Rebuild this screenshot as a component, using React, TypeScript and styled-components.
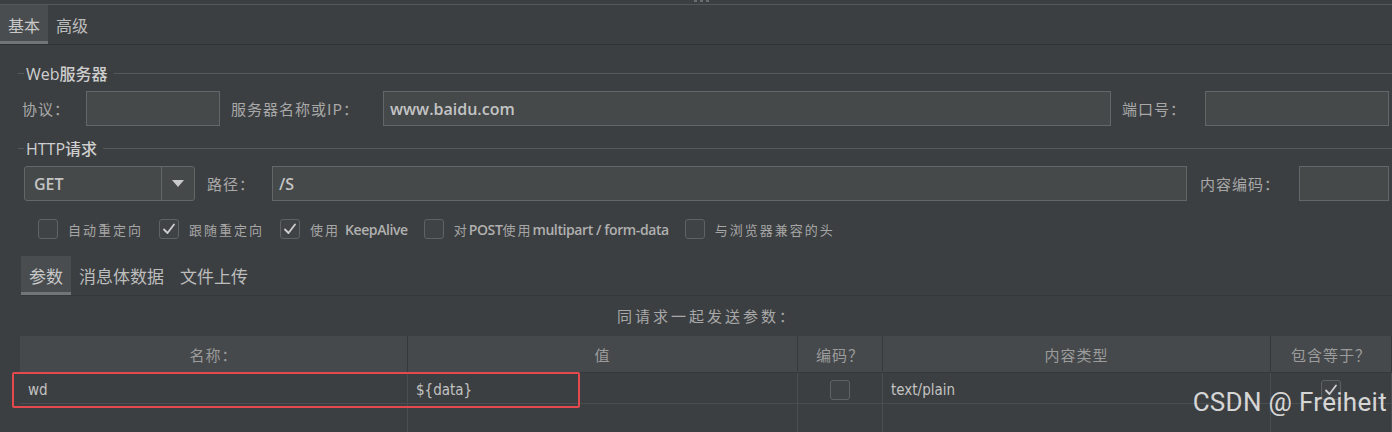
import React from "react";
import styled, { createGlobalStyle } from "styled-components";

const Global = createGlobalStyle`
  html, body { margin: 0; padding: 0; background: #3c3f41; }
  body { width: 1392px; height: 432px; overflow: hidden; }
  * { box-sizing: border-box; }
`;

const CJK = `"Noto Sans CJK SC", "Noto Sans", sans-serif`;

const Page = styled.div`
  position: relative;
  width: 1392px;
  height: 432px;
  overflow: hidden;
  background: #3c3f41;
  color: #bbbbbb;
  font-family: ${CJK};
`;

const TopStrip = styled.div`
  height: 5px;
  border-bottom: 1px solid #555759;
  display: flex;
  justify-content: center;
  gap: 3px;
  padding-left: 10px;
`;

const GripDot = styled.span`
  width: 3px;
  height: 2px;
  background: #6a6d70;
`;

const TabBar = styled.div`
  display: flex;
  height: 40px;
  border-bottom: 1px solid #303234;
`;

const Tab = styled.div<{ $active?: boolean; $size: number }>`
  display: flex;
  align-items: center;
  padding: 0 8px;
  font-size: ${(p) => p.$size}px;
  color: ${(p) => (p.$active ? "#c8c8c8" : "#bdbdbd")};
  background: ${(p) => (p.$active ? "#494d50" : "transparent")};
  border-bottom: 3px solid ${(p) => (p.$active ? "#70757a" : "transparent")};
  padding-top: 3px;
`;

const Content = styled.div`
  display: flex;
  flex-direction: column;
`;

const GroupTitle = styled.div<{ $mt: number }>`
  display: flex;
  align-items: center;
  height: 20px;
  margin-top: ${(p) => p.$mt}px;
  padding-left: 18px;
  font-size: 16px;
  font-weight: 500;
  color: #cfcfcf;
  font-family: "Open Sans", ${CJK};
`;

const TitleLine = styled.span<{ $grow?: boolean }>`
  height: 1px;
  background: #56595c;
  width: 6px;
  flex: ${(p) => (p.$grow ? "1" : "none")};
  margin: 0 ${(p) => (p.$grow ? "0 0 6px" : "2px 0 0")};
`;

const FieldRow = styled.div<{ $mt: number; $pl: number }>`
  display: flex;
  align-items: center;
  height: 35px;
  margin-top: ${(p) => p.$mt}px;
  padding-left: ${(p) => p.$pl}px;
  padding-right: 3px;
`;

const Label = styled.div<{ $w: number; $ml?: number }>`
  width: ${(p) => p.$w}px;
  margin-left: ${(p) => p.$ml ?? 0}px;
  flex: none;
  font-size: 15px;
  color: #a8a8a8;
  letter-spacing: 1px;
  white-space: nowrap;
`;

const Input = styled.div<{ $w?: number }>`
  height: 35px;
  ${(p) => (p.$w ? `width: ${p.$w}px; flex: none;` : "flex: 1;")}
  background: #45494a;
  border: 1px solid #646768;
  display: flex;
  align-items: center;
  padding-left: 6px;
  font-family: "Open Sans", sans-serif;
  font-size: 16px;
  font-weight: 600;
  color: #c4c4c4;
`;

const Combo = styled.div`
  width: 171px;
  height: 35px;
  flex: none;
  display: flex;
  background: #45494a;
  border: 1px solid #646768;
  border-radius: 3px;
`;

const ComboValue = styled.div`
  flex: 1;
  display: flex;
  align-items: center;
  padding-left: 9px;
  font-family: "Open Sans", sans-serif;
  font-size: 16px;
  font-weight: 600;
  color: #c4c4c4;
  border-right: 1px solid #646768;
`;

const ComboArrow = styled.div`
  width: 32px;
  display: flex;
  align-items: center;
  justify-content: center;
`;

const CheckRow = styled.div`
  display: flex;
  align-items: center;
  height: 20px;
  margin-top: 18px;
  padding-left: 38px;
`;

const CheckItem = styled.div`
  display: flex;
  align-items: center;
  margin-right: 16px;
`;

const Box = styled.div<{ $size?: number }>`
  width: ${(p) => p.$size ?? 20}px;
  height: ${(p) => p.$size ?? 20}px;
  flex: none;
  border: 1px solid #5f6263;
  border-radius: 3px;
  background: #3f4345;
  display: flex;
  align-items: center;
  justify-content: center;
`;

const CheckText = styled.span`
  margin-left: 10px;
  font-size: 13px;
  letter-spacing: 2px;
  color: #a6a6a6;
  white-space: nowrap;
`;

const Latin = styled.span`
  font-family: "Open Sans", sans-serif;
  font-weight: 600;
  letter-spacing: -0.4px;
  font-size: 14px;
  color: #b0b0b0;
`;

const SubTabBar = styled.div`
  display: flex;
  height: 40px;
  margin-top: 17px;
  margin-left: 21px;
  border-bottom: 1px solid #35383a;
`;

const Caption = styled.div`
  height: 20px;
  margin-top: 10px;
  text-align: center;
  font-size: 15px;
  letter-spacing: 3px;
  color: #a8a8a8;
  padding-left: 22px;
  line-height: 20px;
`;

const Table = styled.div`
  margin-top: 10px;
  margin-left: 20px;
  display: grid;
  grid-template-columns: 388px 390px 85px 388px 1fr;
  grid-template-rows: 37px 31px 40px;
`;

const HeadCell = styled.div`
  background: #45494b;
  border-right: 1px solid #36393b;
  border-bottom: 1px solid #36393b;
  display: flex;
  align-items: center;
  justify-content: center;
  font-size: 15px;
  letter-spacing: 1px;
  color: #9c9c9c;
`;

const Cell = styled.div<{ $center?: boolean }>`
  border-right: 1px solid #4b4e51;
  border-bottom: 1px solid #4b4e51;
  display: flex;
  align-items: center;
  justify-content: ${(p) => (p.$center ? "center" : "flex-start")};
  padding-left: ${(p) => (p.$center ? 0 : 8)}px;
  padding-top: 3px;
  font-family: "DejaVu Sans Condensed", "DejaVu Sans", sans-serif;
  font-size: 15px;
  color: #c2c2c2;
`;

const Highlight = styled.div`
  position: absolute;
  left: 12px;
  top: 372px;
  width: 568px;
  height: 36px;
  border: 2px solid #e5484d;
  border-radius: 2px;
  pointer-events: none;
`;

const Watermark = styled.div`
  position: absolute;
  right: 5px;
  top: 387px;
  font-family: Roboto, "Liberation Sans", sans-serif;
  font-size: 26px;
  color: rgba(235, 235, 235, 0.9);
  letter-spacing: 0.3px;
`;

const Tick = () => (
  <svg width="14" height="14" viewBox="0 0 14 14">
    <path d="M2 7.5 L5.5 11 L12 2.5" fill="none" stroke="#cfcfcf" strokeWidth="1.8" strokeLinecap="round" strokeLinejoin="round" />
  </svg>
);

const Check = ({ checked, children }: { checked?: boolean; children: React.ReactNode }) => (
  <CheckItem>
    <Box>{checked && <Tick />}</Box>
    <CheckText>{children}</CheckText>
  </CheckItem>
);

export default function App() {
  return (
    <>
      <Global />
      <Page>
        <TopStrip>
          <GripDot />
          <GripDot />
          <GripDot />
        </TopStrip>
        <TabBar>
          <Tab $active $size={16}>基本</Tab>
          <Tab $size={16}>高级</Tab>
        </TabBar>
        <Content>
          <GroupTitle $mt={18}>
            <TitleLine />
            Web服务器
            <TitleLine $grow />
          </GroupTitle>
          <FieldRow $mt={8} $pl={22}>
            <Label $w={64}>协议：</Label>
            <Input $w={134} />
            <Label $w={152} $ml={11}>服务器名称或IP：</Label>
            <Input>www.baidu.com</Input>
            <Label $w={83} $ml={11}>端口号：</Label>
            <Input $w={184} />
          </FieldRow>
          <GroupTitle $mt={12}>
            <TitleLine />
            HTTP请求
            <TitleLine $grow />
          </GroupTitle>
          <FieldRow $mt={8} $pl={24}>
            <Combo>
              <ComboValue>GET</ComboValue>
              <ComboArrow>
                <svg width="12" height="7" viewBox="0 0 12 7">
                  <path d="M0 0 H12 L6 7 Z" fill="#c9c9c9" />
                </svg>
              </ComboArrow>
            </Combo>
            <Label $w={65} $ml={12}>路径：</Label>
            <Input>/S</Input>
            <Label $w={99} $ml={13}>内容编码：</Label>
            <Input $w={90} />
          </FieldRow>
          <CheckRow>
            <Check>自动重定向</Check>
            <Check checked>跟随重定向</Check>
            <Check checked>使用 <Latin>KeepAlive</Latin></Check>
            <Check>对<Latin>POST</Latin>使用<Latin>multipart / form-data</Latin></Check>
            <Check>与浏览器兼容的头</Check>
          </CheckRow>
          <SubTabBar>
            <Tab $active $size={17}>参数</Tab>
            <Tab $size={17}>消息体数据</Tab>
            <Tab $size={17}>文件上传</Tab>
          </SubTabBar>
          <Caption>同请求一起发送参数：</Caption>
          <Table>
            <HeadCell>名称：</HeadCell>
            <HeadCell>值</HeadCell>
            <HeadCell>编码？</HeadCell>
            <HeadCell>内容类型</HeadCell>
            <HeadCell>包含等于？</HeadCell>
            <Cell>wd</Cell>
            <Cell>{"${data}"}</Cell>
            <Cell $center>
              <Box />
            </Cell>
            <Cell>text/plain</Cell>
            <Cell $center>
              <Box><Tick /></Box>
            </Cell>
            <Cell />
            <Cell />
            <Cell />
            <Cell />
            <Cell />
          </Table>
        </Content>
        <Highlight />
        <Watermark>CSDN @ Freiheit</Watermark>
      </Page>
    </>
  );
}
